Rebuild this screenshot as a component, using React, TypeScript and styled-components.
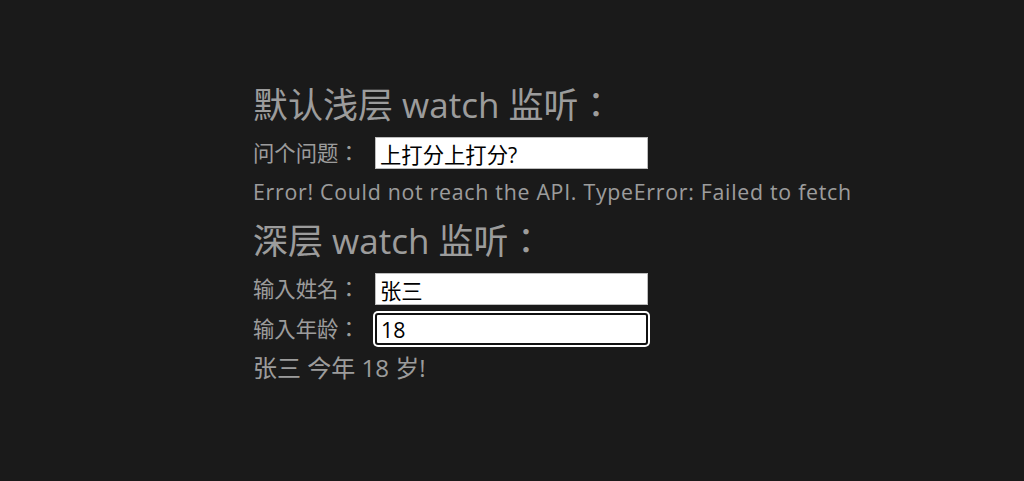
import React from "react";
import styled, { createGlobalStyle } from "styled-components";

const GlobalStyle = createGlobalStyle`
  html, body {
    margin: 0;
    padding: 0;
    background: #1a1a1a;
  }
  body {
    font-family: "Open Sans", "Noto Sans CJK TC", sans-serif;
    color: rgba(235, 235, 235, 0.64);
  }
`;

const Page = styled.div`
  min-height: 481px;
  box-sizing: border-box;
  padding: 83px 0 0 253px;
  display: flex;
  flex-direction: column;
  gap: 8px;
`;

const Heading = styled.h2<{ $top?: number }>`
  margin: ${(p) => p.$top ?? 0}px 0 2px 0;
  font-size: 35px;
  font-weight: 400;
  line-height: 44px;
  color: rgba(235, 235, 235, 0.64);
`;

const Row = styled.div`
  display: flex;
  align-items: center;
  height: 32px;
`;

const Label = styled.label`
  font-size: 21.33px;
  line-height: 32px;
  width: 122px;
  flex: none;
`;

const Input = styled.input<{ $focused?: boolean }>`
  box-sizing: border-box;
  width: 273px;
  height: 32px;
  margin: 0;
  padding: 0 4px;
  background: #fff;
  color: #000;
  font-family: "Open Sans", "Noto Sans CJK SC", sans-serif;
  font-size: 21.33px;
  border: ${(p) => (p.$focused ? "2px solid #111" : "1px solid #bdbdbd")};
  border-radius: ${(p) => (p.$focused ? "3px" : "0")};
  box-shadow: ${(p) => (p.$focused ? "0 0 0 2px #fff" : "none")};
  outline: none;
`;

const ErrorLine = styled.p`
  margin: 0;
  font-size: 21.33px;
  line-height: 30px;
  letter-spacing: 0.72px;
`;

const Result = styled.p`
  margin: 0;
  font-size: 24px;
  line-height: 30px;
`;

export default function App() {
  return (
    <>
      <GlobalStyle />
      <Page>
        <Heading>默认浅层 watch 监听：</Heading>
        <Row>
          <Label>问个问题：</Label>
          <Input defaultValue="上打分上打分?" />
        </Row>
        <ErrorLine>Error! Could not reach the API. TypeError: Failed to fetch</ErrorLine>
        <Heading $top={4}>深层 watch 监听：</Heading>
        <Row>
          <Label>输入姓名：</Label>
          <Input defaultValue="张三" />
        </Row>
        <Row>
          <Label>输入年龄：</Label>
          <Input $focused defaultValue="18" />
        </Row>
        <Result>张三 今年 18 岁!</Result>
      </Page>
    </>
  );
}
